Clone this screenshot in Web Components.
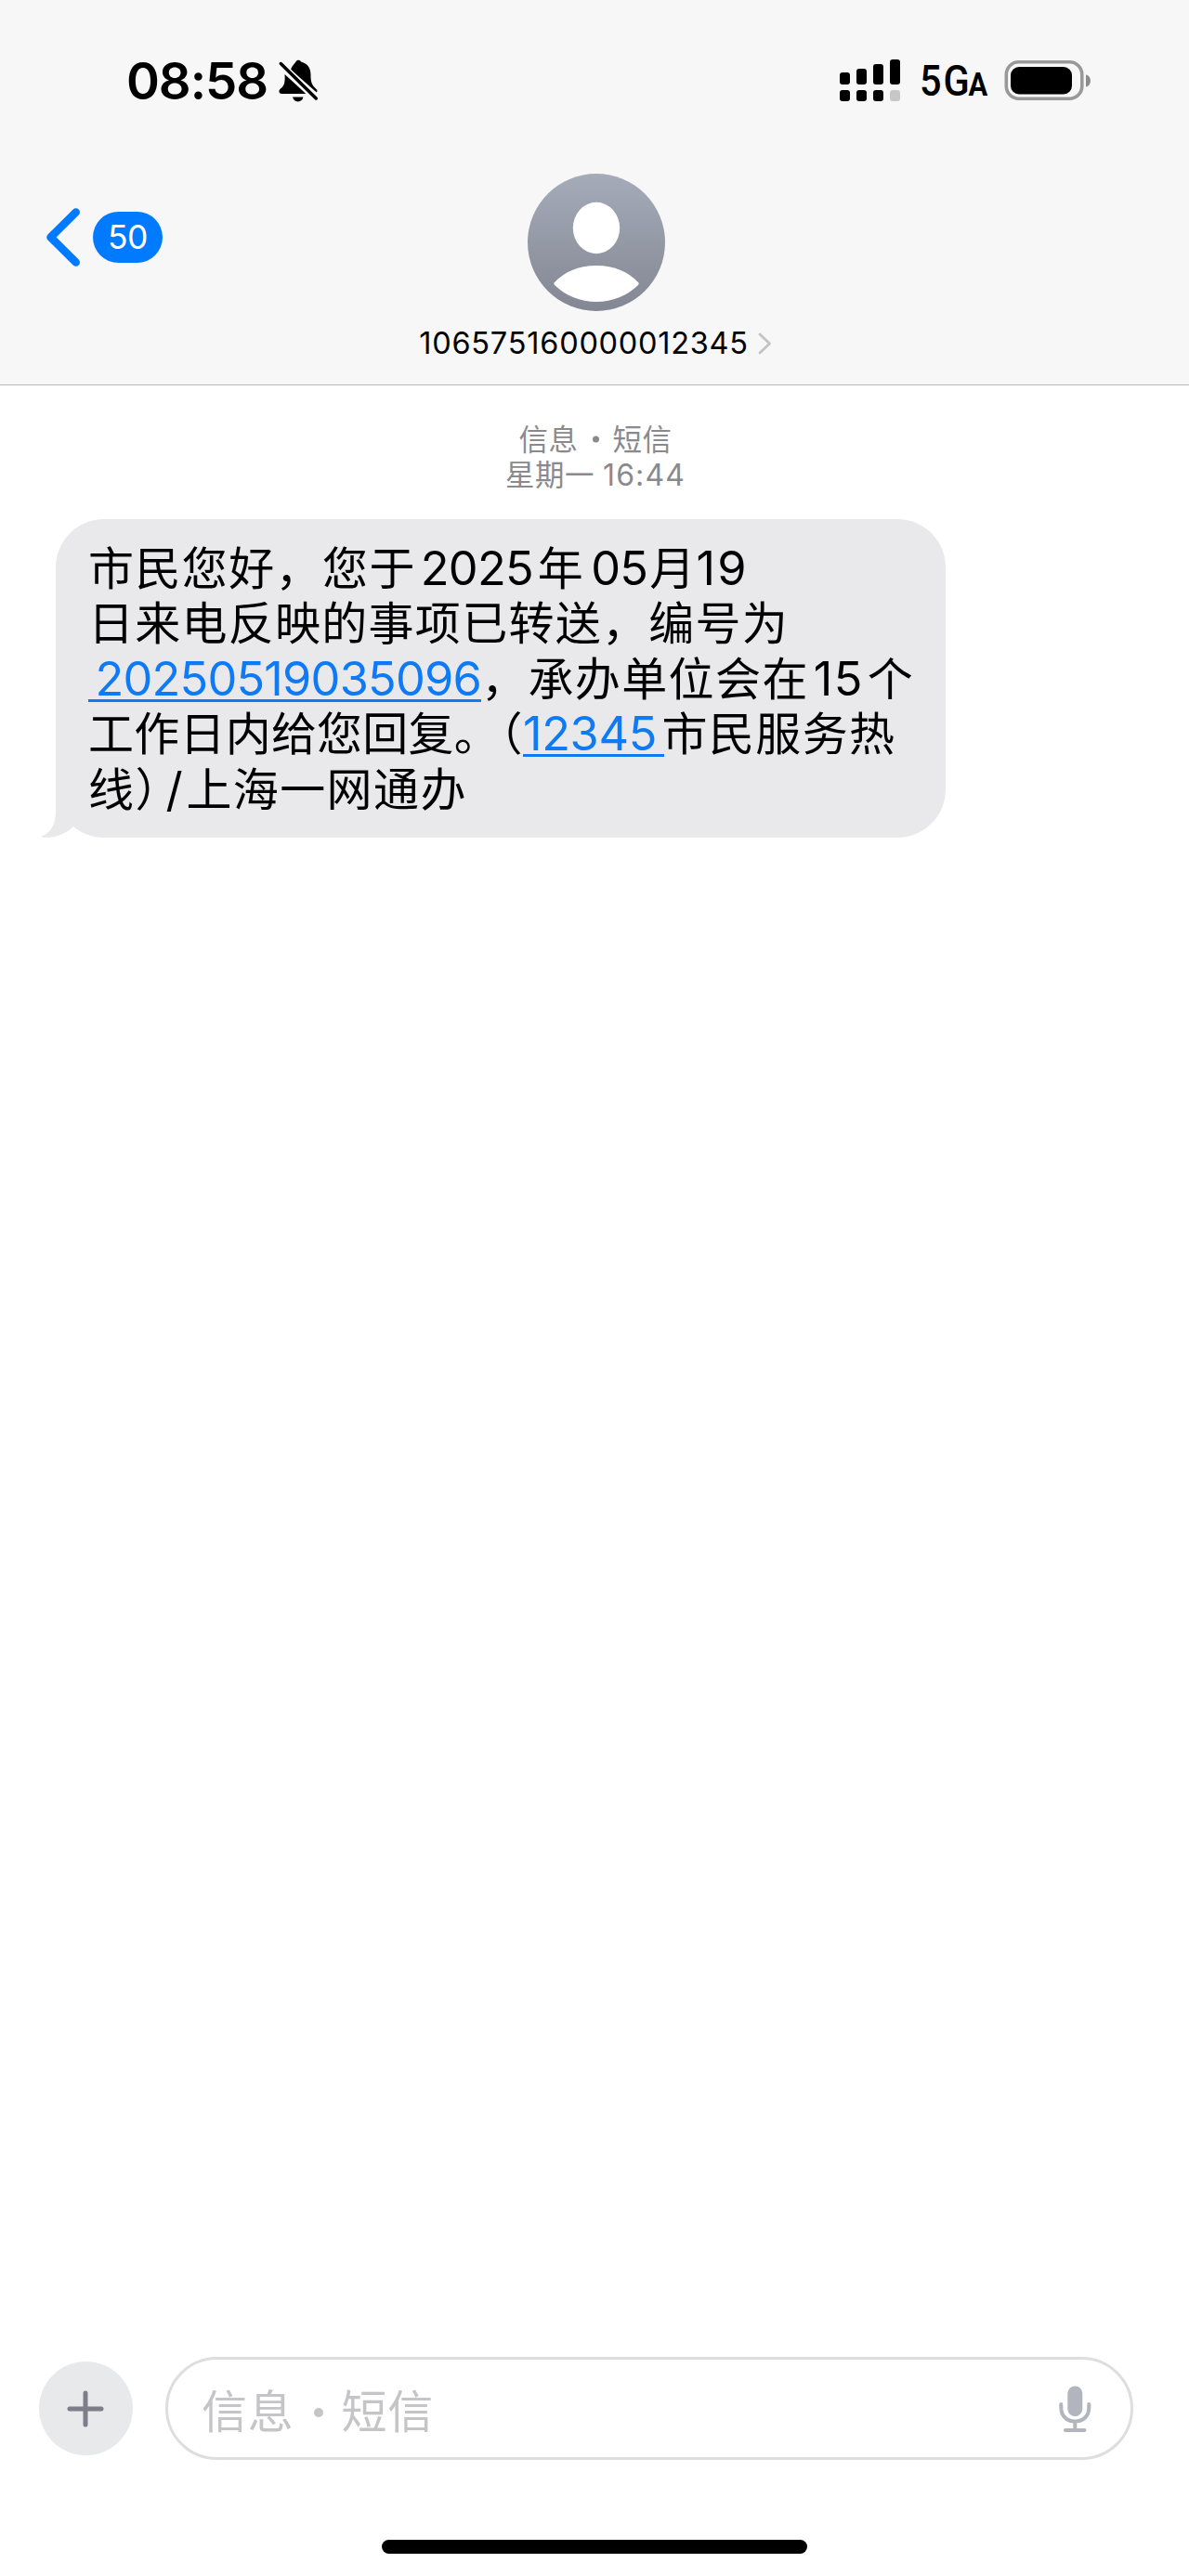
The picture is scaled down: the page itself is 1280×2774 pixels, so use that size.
<!DOCTYPE html>
<html lang="zh-CN">
<head>
<meta charset="utf-8">
<title>信息</title>
<style>
html,body{margin:0;background:#fff}
body{font-family:Inter,"Noto Sans CJK SC",sans-serif;color:#000}
</style>
</head>
<body>
<message-screen></message-screen>
<script>
const define = (name, html, setup) => {
  const tpl = document.createElement('template');
  tpl.innerHTML = html;
  customElements.define(name, class extends HTMLElement {
    connectedCallback() {
      if (this.shadowRoot) return;
      this.attachShadow({mode: 'open'}).append(document.importNode(tpl.content, true));
      if (setup) setup(this);
    }
  });
};

// A run of text tracked so that it fills the advance width given by "w".
define('text-run', `
<style>
:host{display:block;flex:none;white-space:nowrap;font-feature-settings:"kern" 0,"calt" 0}
:host([cjk]){font-family:"Noto Sans CJK SC",sans-serif;font-size:var(--cjk-size,49px);font-weight:400}
:host([half]){font-feature-settings:"halt" 1}
</style><slot></slot>`, el => {
  const w = parseFloat(el.getAttribute('w'));
  if (el.hasAttribute('gap')) el.style.marginLeft = el.getAttribute('gap') + 'px';
  const r = document.createRange();
  r.selectNodeContents(el);
  const n = el.textContent.length;
  el.style.letterSpacing = (w - r.getBoundingClientRect().width) / n + 'px';
  el.style.width = w + 'px';
});

define('text-link', `
<style>
:host{display:flex;flex:none;align-items:baseline;color:#0f7af5;height:59.45px;
background:linear-gradient(#0f7af5,#0f7af5) 0 52px/100% 3px no-repeat}
</style><slot></slot>`);

define('text-row', `
<style>:host{display:flex;align-items:baseline;height:59.45px;line-height:59.45px}</style><slot></slot>`);

define('status-bar', `
<style>
:host{display:flex;align-items:center;justify-content:space-between;height:174px;box-sizing:border-box;padding:0 105px 0 136px}
.l,.r{display:flex;align-items:center}
.time{font-size:54.5px;font-weight:600;line-height:60px}
.bell{margin-left:11px}
.net{display:flex;align-items:baseline;margin:4px 0 0 20px;width:73px;font-family:Roboto,sans-serif;font-weight:500;line-height:50px}
.net text-run{font-size:46px;transform:scaleX(.9);transform-origin:0 50%}
.net .a{font-size:35px;font-weight:700;transform:scaleX(.88);margin-left:-5px}
.bat{margin-left:18px}
svg{display:block}
</style>
<div class="l">
<text-run class="time" w="152">08:58</text-run>
<svg class="bell" width="44" height="48" viewBox="299 63 44 48">
<path d="M313 75C314 71 317 69 318.500 66.500C319.500 64 323 64 324 66.500C332 68.500 334.500 74 334.500 81C334.500 89 336 92 341 96.500C341.700 97.200 341.600 98.500 340.800 99.500Z"/>
<path d="M306.500 80L329.500 101H303.500C300 101 299.500 97.500 302 95.500C306.500 92 307 88 306.500 80Z"/>
<path d="M315 104.500H326.500C325 111 316.500 111 315 104.500Z"/>
<path d="M303 69.500L340 106.500" stroke="#f7f7f7" stroke-width="7" stroke-linecap="round"/>
<path d="M302.300 68.500L340.300 106" stroke="#000" stroke-width="3.500" stroke-linecap="round"/>
</svg>
</div>
<div class="r">
<svg width="66" height="46" viewBox="903 63 66 46">
<rect x="903" y="77" width="11" height="13" rx="3"/><rect x="921" y="73" width="11" height="17" rx="3"/><rect x="939" y="68" width="11" height="22" rx="3"/><rect x="957" y="63" width="11" height="27" rx="3"/>
<rect x="903" y="96" width="11" height="12" rx="3"/><rect x="921" y="96" width="11" height="12" rx="3"/><rect x="939" y="96" width="11" height="12" rx="3"/><rect x="957" y="96" width="11" height="12" rx="3" fill="#c7c7c7"/>
</svg>
<div class="net"><text-run w="56">5G</text-run><span class="a">A</span></div>
<svg class="bat" width="94" height="44" viewBox="1081 64 94 44">
<rect x="1083.300" y="65.800" width="81.500" height="39.500" rx="13.500" fill="none" stroke="#999" stroke-width="3.600"/>
<rect x="1088" y="71" width="66" height="29.500" rx="9"/>
<path d="M1169 79.500C1175.500 80.500 1175.500 91.500 1169 92.500Z" fill="#8c8c8c"/>
</svg>
</div>`);

define('back-button', `
<style>
:host{display:flex;align-items:center;gap:14px}
.n{display:flex;justify-content:center;width:75px;height:55px;border-radius:28px;background:#007aff;color:#fff;font-size:35.500px;line-height:55px}
svg{display:block}
</style>
<svg width="36" height="63" viewBox="0 0 36 63"><path d="M31.700 4.500L4.500 31.500L31.700 58.500" fill="none" stroke="#007aff" stroke-width="8.600" stroke-linecap="round" stroke-linejoin="round"/></svg>
<div class="n"><text-run w="43">50</text-run></div>`);

define('contact-title', `
<style>
:host{display:flex;flex-direction:column;align-items:center}
.num{display:flex;align-items:center;height:42px;margin:14px 1px 0 0;font-size:32.500px;line-height:42px}
svg{display:block}
.num svg{margin-left:10px}
</style>
<svg width="148" height="148" viewBox="0 0 148 148">
<defs><linearGradient id="g" x2="0" y2="1"><stop stop-color="#a5abb9"/><stop offset="1" stop-color="#848793"/></linearGradient></defs>
<circle cx="74" cy="74" r="74" fill="url(#g)"/>
<ellipse cx="74" cy="58.500" rx="25.200" ry="27.700" fill="#fff"/>
<path d="M28.800 117.200C39 106 54.500 99 74 99S109 106 119.200 117.200Q120.300 118.600 119 120C107 131.500 91.500 138 74 138S41 131.500 29 120Q27.700 118.600 28.800 117.200Z" fill="#fff"/>
</svg>
<div class="num"><text-run w="354.500">106575160000012345</text-run>
<svg width="15" height="24" viewBox="0 0 15 24"><path d="M2 2L12.500 12L2 22" fill="none" stroke="#c3c3c5" stroke-width="2.800" stroke-linecap="round" stroke-linejoin="round"/></svg></div>`);

define('nav-header', `
<style>
:host{display:block;height:415px;background:#f7f7f7;border-bottom:1.500px solid #b9b9b9;box-sizing:border-box}
.row{display:grid;grid-template-columns:1fr auto 1fr;align-items:start;padding:13px 0 0 50px}
back-button{margin-top:37px}
contact-title{margin-right:47px}
</style>
<status-bar></status-bar>
<div class="row"><back-button></back-button><contact-title></contact-title><span></span></div>`);

define('time-stamp', `
<style>
:host{display:flex;flex-direction:column;align-items:center;color:#8a8a8e;--cjk-size:31.500px;font-size:32px;padding:36.500px 0 0 2px}
div{display:flex;align-items:baseline;height:38.500px;line-height:38.500px}
svg{display:block;align-self:center;margin:0 15px}
</style>
<div><text-run cjk w="64">信息</text-run><svg width="7" height="38" viewBox="0 0 7 38"><circle cx="3.500" cy="21" r="3.500" fill="currentColor"/></svg><text-run cjk w="64">短信</text-run></div>
<div><text-run cjk w="96">星期一</text-run><text-run gap="9" w="89">16:44</text-run></div>`);

define('message-bubble', `
<style>
:host{display:flex;flex-direction:column;position:relative;width:958px;height:343px;margin:30.500px 0 0 60px;padding:20px 0 0 35px;box-sizing:border-box;border-radius:52px;background:#e9e9eb;font-size:50.500px}
.tail{position:absolute;left:-16px;bottom:0}
</style>
<slot></slot>
<svg class="tail" width="60" height="60" viewBox="44 842 60 60"><path d="M60 842V874C60 888 54.500 897 45 900.500C44 901 44.500 901.500 46 901.700C58 902.500 69 899.500 79 890L100 860Z" fill="#e9e9eb"/></svg>`);

define('compose-bar', `
<style>
:host{display:flex;align-items:center;gap:35px;padding:0 60px 0 42px;height:111px}
.add{display:flex;align-items:center;justify-content:center;width:101px;height:101px;border-radius:50%;background:#e8e9eb;flex:none}
.add svg{margin-right:1px}
.field{display:flex;align-items:center;flex:1;height:111px;box-sizing:border-box;border:3px solid #dedede;border-radius:56px;padding:0 42px 0 36px;color:#c5c5c7;line-height:60px}
.dot{width:10px;height:10px;border-radius:50%;background:#c5c5c7;margin:8px 20px 0 21px}
svg{display:block}
.mic{margin-left:auto}
</style>
<div class="add"><svg width="40" height="40" viewBox="0 0 40 40"><path d="M20 3V37M3 20H37" stroke="#7d7e87" stroke-width="5" stroke-linecap="round"/></svg></div>
<div class="field"><text-run cjk w="99.500">信息</text-run><span class="dot"></span><text-run cjk w="99.500">短信</text-run>
<svg class="mic" width="36" height="52" viewBox="1139 2568 36 52"><rect x="1149.300" y="2569.500" width="16" height="32.500" rx="8" fill="#b2b5bd"/><path d="M1142.300 2589V2592.500C1142.300 2602 1148.500 2607.500 1157.300 2607.500S1172.300 2602 1172.300 2592.500V2589M1157.300 2608V2616M1147 2617H1167.500" fill="none" stroke="#b2b5bd" stroke-width="4" stroke-linecap="round"/></svg></div>`);

define('home-indicator', `
<style>:host{display:block;width:458px;height:15px;border-radius:8px;background:#000;margin:86px auto 24px}</style>`);

define('message-screen', `
<style>
:host{display:flex;flex-direction:column;width:1280px;height:2774px;background:#fff;overflow:hidden}
main{flex:1}
</style>
<nav-header></nav-header>
<main>
<time-stamp></time-stamp>
<message-bubble>
<text-row><text-run cjk w="352.800">市民您好，您于</text-run><text-run gap="5" w="121">2025</text-run><text-run cjk gap="5" w="50.400">年</text-run><text-run gap="7" w="61">05</text-run><text-run cjk gap="2" w="50.400">月</text-run><text-run gap="0" w="56">19</text-run></text-row>
<text-row><text-run cjk w="754">日来电反映的事项已转送，编号为</text-run></text-row>
<text-row><text-link><text-run gap="7.500" w="415.500">20250519035096</text-run></text-link><text-run cjk w="352.800">，承办单位会在</text-run><text-run gap="5" w="54">15</text-run><text-run cjk gap="4" w="50.400">个</text-run></text-row>
<text-row><text-run cjk w="443">工作日内给您回复。</text-run><text-run cjk half w="25">（</text-run><text-link><text-run w="144">12345</text-run><text-run w="8">&nbsp;</text-run></text-link><text-run cjk gap="-2.500" w="252">市民服务热</text-run></text-row>
<text-row><text-run cjk w="50.400">线</text-run><text-run cjk half w="25">）</text-run><text-run gap="8" w="20">/</text-run><text-run cjk gap="2" w="302.400">上海一网通办</text-run></text-row>
</message-bubble>
</main>
<compose-bar></compose-bar>
<home-indicator></home-indicator>`);
</script>
</body>
</html>
